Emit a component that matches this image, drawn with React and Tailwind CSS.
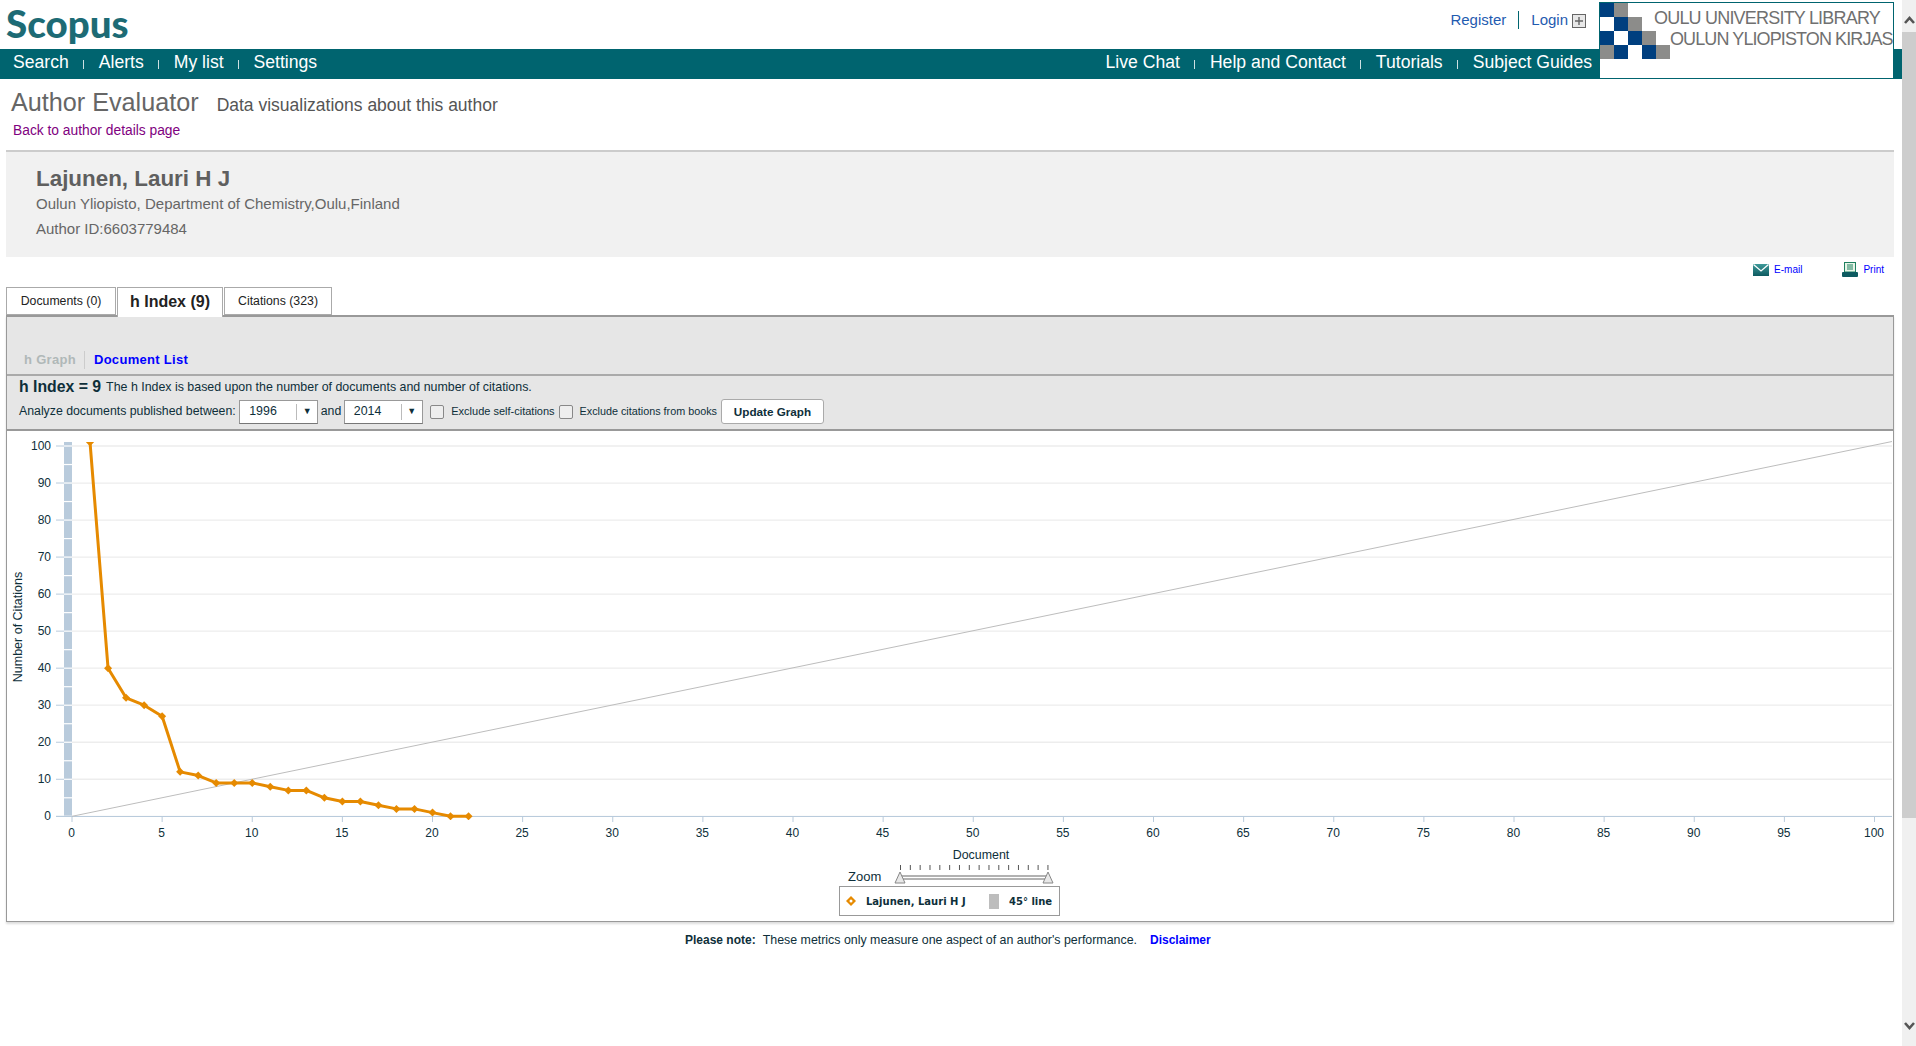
const NAV_LEFT = ['Search', 'Alerts', 'My list', 'Settings'];
const NAV_RIGHT = ['Live Chat', 'Help and Contact', 'Tutorials', 'Subject Guides'];

const CITATIONS = [101, 40, 32, 30, 27, 12, 11, 9, 9, 9, 8, 7, 7, 5, 4, 4, 3, 2, 2, 1, 0, 0];

const px = (v) => 72 + v * 18.025;
const py = (v) => 816.3 - v * 3.703;

// checker blocks of the library logo, by row
const LOGO_ROWS = [
  ['b', 'g'],
  ['w', 'b', 'g'],
  ['b', 'w', 'b', 'g'],
  ['g', 'b', 'w', 'b', 'g'],
];

function NavItems({ items }) {
  return (
    <div className="flex items-center">
      {items.map((item, i) => (
        <div key={item} className="flex items-center">
          {i > 0 && <span className="mx-[14.5px] mt-[3px] h-[9px] w-px bg-white/80" />}
          <span className="text-[17.6px] leading-none text-white">{item}</span>
        </div>
      ))}
    </div>
  );
}

function LibraryLogo() {
  return (
    <div className="absolute left-[1599px] top-[2px] h-[77px] w-[295px] border border-[#00646f] bg-white">
      <div className="flex flex-col">
        {LOGO_ROWS.map((row, r) => (
          <div key={r} className="flex h-[14px]">
            {row.map((c, i) => (
              <span
                key={i}
                className={`h-[14px] w-[14px] ${
                  c === 'b' ? 'bg-[#003f7f]' : c === 'g' ? 'bg-[#8c8c8a]' : 'bg-white'
                }`}
              />
            ))}
          </div>
        ))}
      </div>
      <span className="absolute left-[54px] top-[5px] whitespace-nowrap text-[18px] leading-5 tracking-[-0.8px] text-[#707070]">
        OULU UNIVERSITY LIBRARY
      </span>
      <span className="absolute left-[70px] top-[26px] whitespace-nowrap text-[18px] leading-5 tracking-[-0.9px] text-[#707070]">
        OULUN YLIOPISTON KIRJAS
      </span>
    </div>
  );
}

function Select({ value }) {
  return (
    <div className="flex h-[24px] w-[79px] items-center border border-[#999] border-b-[#777] bg-white text-[12.4px] text-[#0e2f3a]">
      <span className="ml-[9px] flex-1">{value}</span>
      <span className="h-[16px] w-px bg-[#bbb]" />
      <span className="w-[20px] text-center text-[9px] leading-none">▼</span>
    </div>
  );
}

function Checkbox() {
  return <span className="block h-[14px] w-[14px] rounded-[2px] border border-[#888] bg-[#eee]" />;
}

function Chevron({ d }) {
  return (
    <svg width="11" height="8" viewBox="0 0 11 8">
      <path d={d} fill="none" stroke="#555" strokeWidth="2.6" />
    </svg>
  );
}

function Chart() {
  const grid = Array.from({ length: 11 }, (_, i) => i * 10);
  const xTicks = Array.from({ length: 21 }, (_, i) => i * 5);
  const bands = Array.from({ length: 21 }, (_, i) => i * 5);
  const points = CITATIONS.map((c, i) => `${px(i + 1)},${py(c)}`).join(' ');

  return (
    <svg width="1886" height="490" viewBox="7 431 1886 490" className="block">
      <defs>
        <clipPath id="plot">
          <rect x="64" y="442" width="1829" height="378" />
        </clipPath>
      </defs>
      {grid.map((v) => (
        <line key={v} x1="64" x2="1892" y1={py(v)} y2={py(v)} stroke="#ededed" strokeWidth="1.3" />
      ))}
      <rect x="64" y="442" width="8" height="374.3" fill="#b9cbdc" />
      {bands.map((v) => (
        <line key={v} x1="64" x2="72" y1={py(v)} y2={py(v)} stroke="#fff" strokeWidth="1.2" />
      ))}
      {grid.map((v) => (
        <g key={v}>
          <line x1="56" x2="64" y1={py(v)} y2={py(v)} stroke="#b9cbdc" />
          <text
            x="51"
            y={py(v) + 4}
            textAnchor="end"
            fontSize="12"
            fill="#0e2f3a"
            fontFamily="Liberation Sans, Arial, sans-serif"
          >
            {v}
          </text>
        </g>
      ))}
      <line x1="56" x2="1892" y1="816.5" y2="816.5" stroke="#b9cbdc" />
      {xTicks.map((v) => (
        <g key={v}>
          <line x1={px(v)} x2={px(v)} y1="816" y2="822" stroke="#b9cbdc" />
          <text
            x={px(v) - 0.5}
            y="837"
            textAnchor="middle"
            fontSize="12"
            fill="#0e2f3a"
            fontFamily="Liberation Sans, Arial, sans-serif"
          >
            {v}
          </text>
        </g>
      ))}
      <text
        x="0"
        y="0"
        transform="translate(22 627) rotate(-90)"
        textAnchor="middle"
        fontSize="12.5"
        fill="#0e2f3a"
        fontFamily="Liberation Sans, Arial, sans-serif"
      >
        Number of Citations
      </text>
      <line x1="72" y1="816.3" x2="1892" y2="441.5" stroke="#bdbdbd" strokeWidth="1" />
      <g clipPath="url(#plot)">
        <polyline points={points} fill="none" stroke="#e68a00" strokeWidth="3" strokeLinejoin="round" />
        {CITATIONS.map((c, i) => (
          <path
            key={i}
            d={`M${px(i + 1)} ${py(c) - 4}l4 4l-4 4l-4 -4z`}
            fill="#e68a00"
          />
        ))}
      </g>
      <text
        x="981"
        y="859"
        textAnchor="middle"
        fontSize="12.4"
        fill="#0e2f3a"
        fontFamily="Liberation Sans, Arial, sans-serif"
      >
        Document
      </text>
      <text x="848" y="881" fontSize="13" fill="#0e2f3a" fontFamily="Liberation Sans, Arial, sans-serif">
        Zoom
      </text>
      {Array.from({ length: 16 }, (_, i) => (
        <line key={i} x1={900.5 + i * 9.83} x2={900.5 + i * 9.83} y1="865" y2="870" stroke="#555" />
      ))}
      <rect x="900" y="876" width="148" height="3" fill="#fff" stroke="#666" strokeWidth="1" />
      <path d="M900 872l5 11h-10z" fill="#e8e8e8" stroke="#888" strokeLinejoin="round" />
      <path d="M1048 872l5 11h-10z" fill="#e8e8e8" stroke="#888" strokeLinejoin="round" />
      <rect x="839.5" y="886.5" width="220" height="29" fill="#fff" stroke="#999" />
      <path d="M851 896l5 5l-5 5l-5 -5z" fill="#e68a00" />
      <circle cx="851" cy="901" r="1.5" fill="#fff" />
      <text
        x="866"
        y="905"
        fontSize="10"
        fontWeight="700"
        fill="#0e2f3a"
        fontFamily="DejaVu Sans, Verdana, sans-serif"
      >
        Lajunen, Lauri H J
      </text>
      <rect x="989" y="894" width="10" height="15" fill="#bdbdbd" />
      <text
        x="1009"
        y="905"
        fontSize="10"
        fontWeight="700"
        fill="#0e2f3a"
        fontFamily="DejaVu Sans, Verdana, sans-serif"
      >
        45° line
      </text>
    </svg>
  );
}

export default function App() {
  return (
    <div className="relative flex h-screen overflow-hidden bg-white font-['Liberation_Sans',Arial,sans-serif]">
      <div className="w-[1902px] shrink-0">
        <div className="flex h-[49px] items-start justify-between">
          <span className="ml-[6px] font-['Lato',sans-serif] text-[38.5px] leading-[46px] font-black text-[#1d6b75]">
            Scopus
          </span>
          <div className="mr-[316px] mt-[11px] flex items-center text-[15px] leading-[18px] text-[#1f5bb0]">
            <span>Register</span>
            <span className="mx-[12px] h-[18px] w-px bg-[#00646f]" />
            <span>Login</span>
            <svg width="14" height="14" viewBox="0 0 14 14" className="ml-[4px] mt-[1px]">
              <rect x="0.5" y="0.5" width="13" height="13" fill="#e8e8e8" stroke="#666" />
              <path d="M7 3v8M3 7h8" stroke="#666" strokeWidth="1.4" />
            </svg>
          </div>
        </div>
        <div className="flex h-[30px] items-center justify-between bg-[#00646f] pb-[2px] pl-[13px] pr-[310px]">
          <NavItems items={NAV_LEFT} />
          <NavItems items={NAV_RIGHT} />
        </div>
        <LibraryLogo />

        <div className="h-[71px] pl-[11px] pt-[7px]">
          <div className="flex h-[32px] items-baseline">
            <h1 className="text-[25.2px] leading-[32px] text-[#666]">Author Evaluator</h1>
            <span className="ml-[18px] text-[17.5px] text-[#555]">Data visualizations about this author</span>
          </div>
          <div className="ml-[2px] mt-[5px] text-[13.8px] leading-[16px] text-[#800080]">Back to author details page</div>
        </div>

        <div className="ml-[6px] h-[107px] w-[1888px] border-t-2 border-[#ccc] bg-[#f1f1f1] pl-[30px] pt-[14px] text-[#666]">
          <div className="text-[22.4px] leading-[26px] font-bold text-[#5f5f5f]">Lajunen, Lauri H J</div>
          <div className="mt-[3px] text-[15px] leading-[18px]">Oulun Yliopisto, Department of Chemistry,Oulu,Finland</div>
          <div className="mt-[7px] text-[15px] leading-[18px]">Author ID:6603779484</div>
        </div>

        <div className="flex h-[30px] w-[1894px] items-start justify-end pr-[10px] pt-[6px] text-[10px] leading-[14px] text-[#0000ff]">
          <svg width="16" height="12" viewBox="0 0 16 12" className="mt-[1px]">
            <defs>
              <linearGradient id="mail" x1="0" y1="0" x2="0" y2="1">
                <stop offset="0" stopColor="#3f9a9a" />
                <stop offset="1" stopColor="#0d5a60" />
              </linearGradient>
            </defs>
            <rect width="16" height="12" fill="url(#mail)" />
            <path d="M0.5 0.5l7.5 6.5l7.5 -6.5" fill="none" stroke="#fff" strokeWidth="1.3" />
          </svg>
          <span className="ml-[5px]">E-mail</span>
          <svg width="16" height="15" viewBox="0 0 16 15" className="ml-[40px] mt-[-1px]">
            <rect x="2.5" y="0.5" width="11" height="9.5" fill="#e8f5e8" stroke="#1f8060" />
            <path d="M5 3h6M5 5h6M5 7h6" stroke="#1f8060" />
            <rect y="10" width="16" height="5" rx="1" fill="#0d5a60" />
          </svg>
          <span className="ml-[5px]">Print</span>
        </div>

        <div className="relative z-10 ml-[6px] flex h-[28px] text-[12.3px] text-[#222]">
          <div className="flex h-[28px] w-[110px] items-center justify-center border border-[#aaa] bg-white">
            Documents (0)
          </div>
          <div className="ml-[1px] flex h-[30px] w-[106px] items-center justify-center border border-b-0 border-[#aaa] bg-white pb-[2px] text-[16px] font-bold">
            h Index (9)
          </div>
          <div className="ml-[1px] flex h-[28px] w-[108px] items-center justify-center border border-[#aaa] bg-white">
            Citations (323)
          </div>
        </div>

        <div className="ml-[6px] h-[607px] w-[1888px] border border-t-2 border-[#999] shadow-[0_2px_2px_#ddd]">
          <div className="flex h-[59px] items-end border-b-2 border-[#aaa] bg-[#e6e6e6] pb-[5px] pl-[17px] text-[13px] leading-[18px] font-bold tracking-[0.3px]">
            <span className="text-[#b0b8b8]">h Graph</span>
            <span className="ml-[8px] mr-[9px] h-[18px] w-px bg-[#ccc]" />
            <span className="text-[#0000ff]">Document List</span>
          </div>
          <div className="h-[55px] border-b-2 border-[#999] bg-[#e6e6e6] pl-[12px] text-[#0e2f3a]">
            <div className="flex h-[22px] items-center">
              <span className="text-[15.8px] font-bold">h Index = 9</span>
              <span className="ml-[5px] text-[12.4px]">The h Index is based upon the number of documents and number of citations.</span>
            </div>
            <div className="flex h-[27px] items-center text-[12.3px]">
              <span className="mr-[3.5px]">Analyze documents published between:</span>
              <Select value="1996" />
              <span className="mx-[2.5px]">and</span>
              <Select value="2014" />
              <span className="ml-[7.5px] mr-[7px]">
                <Checkbox />
              </span>
              <span className="text-[11px]">Exclude self-citations</span>
              <span className="ml-[4px] mr-[7px]">
                <Checkbox />
              </span>
              <span className="text-[10.8px]">Exclude citations from books</span>
              <span className="ml-[4px] flex h-[25px] w-[103px] items-center justify-center rounded-[3px] border border-[#aaa] bg-white text-[11.7px] font-bold text-[#0e2f3a]">
                Update Graph
              </span>
            </div>
          </div>
          <Chart />
        </div>

        <div className="ml-[685px] mt-[10px] flex text-[12px] leading-[16px] text-[#0e2f3a]">
          <span className="font-bold">Please note:</span>
          <span className="ml-[7px] text-[12.4px]">These metrics only measure one aspect of an author's performance.</span>
          <span className="ml-[13px] font-bold text-[#0000ff]">Disclaimer</span>
        </div>
      </div>

      <div className="flex w-[14px] flex-col bg-[#f0f0f0]">
        <div className="flex h-[32px] items-center justify-center pt-[8px]">
          <Chevron d="M1 7l4.5 -5l4.5 5" />
        </div>
        <div className="h-[786px] bg-[#cdcdcd]" />
        <div className="flex-1" />
        <div className="flex h-[40px] items-center justify-center">
          <Chevron d="M1 1l4.5 5l4.5 -5" />
        </div>
      </div>
    </div>
  );
}
